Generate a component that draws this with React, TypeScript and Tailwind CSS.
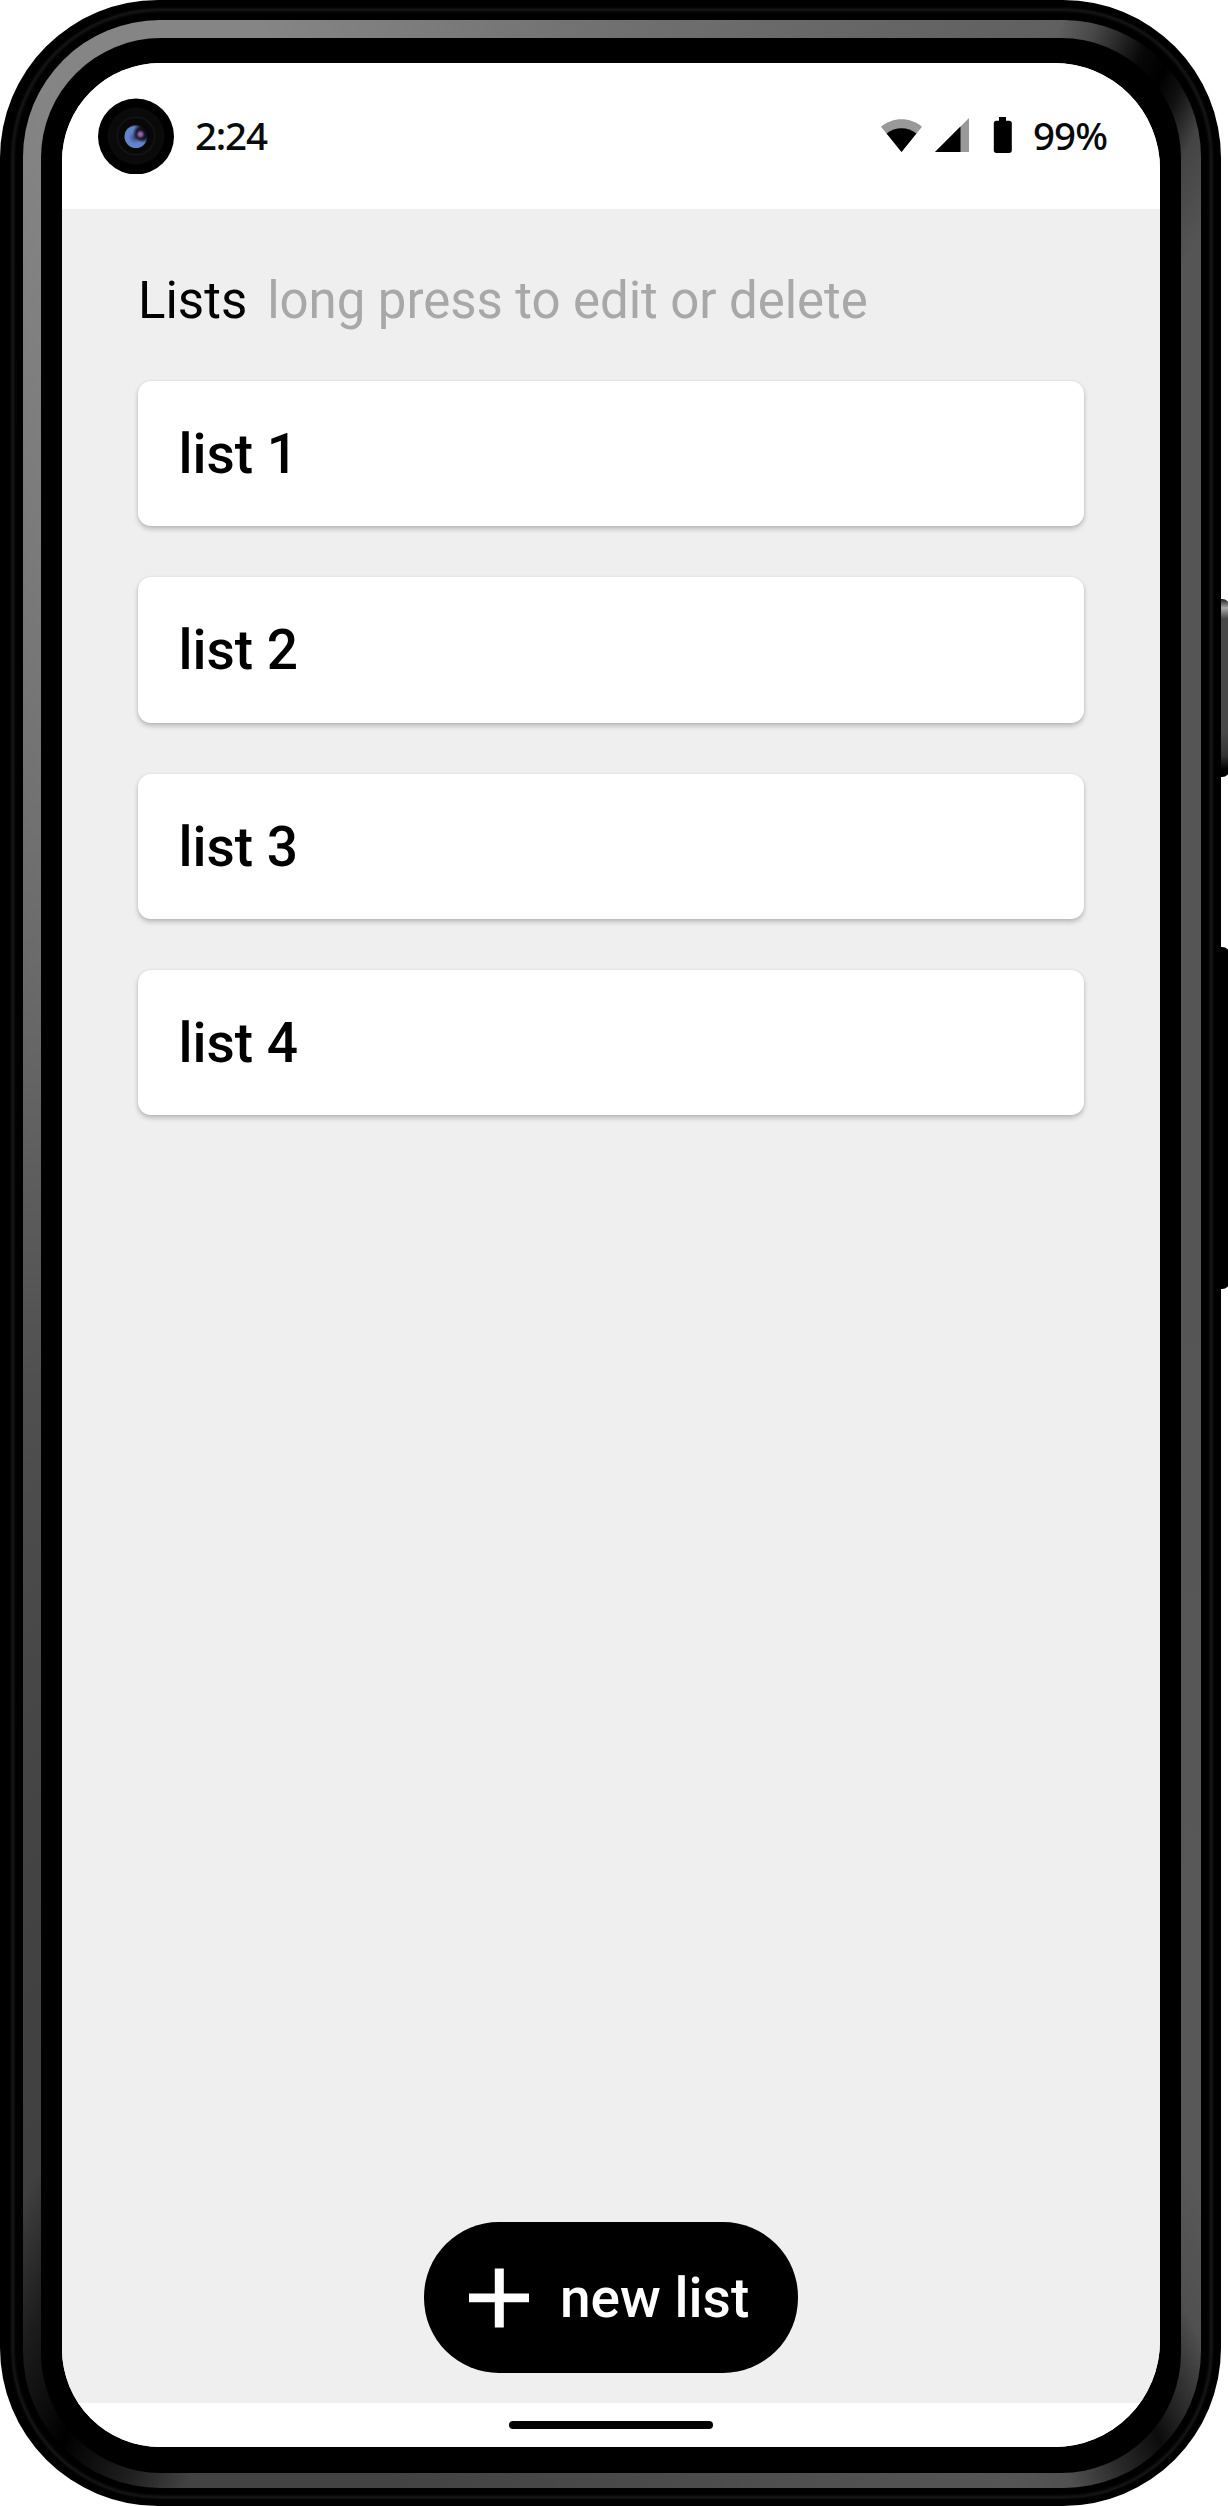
const lists = ['list 1', 'list 2', 'list 3', 'list 4'];

function StatusBar() {
  return (
    <header className="flex h-[146px] items-start bg-white pl-[36px] pt-[35px]">
      <svg width="76" height="76" viewBox="0 0 76 76" className="shrink-0">
        <defs>
          <radialGradient id="lens" cx="0.45" cy="0.55" r="0.58">
            <stop offset="0" stopColor="#3c4a74" />
            <stop offset="0.45" stopColor="#6480cc" />
            <stop offset="0.8" stopColor="#5f88cc" />
            <stop offset="1" stopColor="#5070b8" stopOpacity="0.2" />
          </radialGradient>
          <radialGradient id="shade">
            <stop offset="0" stopColor="#06060c" />
            <stop offset="0.6" stopColor="#06060c" stopOpacity="0.85" />
            <stop offset="1" stopColor="#06060c" stopOpacity="0" />
          </radialGradient>
          <radialGradient id="glare">
            <stop offset="0" stopColor="#b474b4" />
            <stop offset="0.45" stopColor="#704a80" />
            <stop offset="1" stopColor="#0a0a12" stopOpacity="0" />
          </radialGradient>
        </defs>
        <circle cx="38" cy="38.5" r="38" fill="#000" />
        <circle cx="38" cy="38" r="28.5" fill="#0a0a0a" />
        <circle cx="38" cy="38" r="18.7" fill="#080808" stroke="#181818" strokeWidth="1.2" />
        <circle cx="38" cy="38.5" r="11.5" fill="url(#lens)" />
        <circle cx="44.5" cy="35" r="10" fill="url(#shade)" />
        <circle cx="42.4" cy="36.3" r="5.5" fill="url(#glare)" />
      </svg>
      <span className="ml-[21px] mt-[15px] w-[80px] whitespace-nowrap text-[38.5px] font-[550] leading-[44px] tracking-[-1.2px] text-[#060d0a]" style={{ fontFamily: '"Noto Sans", sans-serif' }}>
        2:24
      </span>
      <div className="ml-[606px] mt-[20px] flex items-start">
        <svg width="42" height="34" viewBox="0 0 42 34">
          <path d="M0 8.8C11.5-1.3 29.5-1.3 41 8.8L20.5 34Z" fill="#999" />
          <path d="M5.6 15.6C14.5 8.3 26.5 8.3 35.4 15.6L20.5 34Z" fill="#000" />
        </svg>
        <svg width="34" height="34" viewBox="0 0 34 34" className="ml-[12px]">
          <path d="M34 0V34H0Z" fill="#999" />
          <path d="M25.5 8.5V34H0Z" fill="#000" />
        </svg>
        <svg width="19" height="36" viewBox="0 0 19 36" className="-mt-px ml-[24px]">
          <path d="M6 0H13V3.7H16Q18.8 3.7 18.8 6.2V33.3Q18.8 36 16 36H3.5Q.8 36 .8 33.3V6.2Q.8 3.7 3.5 3.7H6Z" fill="#000" />
        </svg>
      </div>
      <span className="ml-[21px] mt-[15px] whitespace-nowrap text-[38.5px] font-[550] leading-[44px] tracking-[-0.9px] text-[#060a0a]" style={{ fontFamily: '"Noto Sans", sans-serif' }}>
        99%
      </span>
    </header>
  );
}

function ListCard({ title }: { title: string }) {
  return (
    <li className="flex h-[145.3px] items-center rounded-[13px] bg-white pl-[40.5px] pt-[2px] text-[55px] font-medium leading-none text-black shadow-[0_3px_5px_rgba(0,0,0,0.22),0_0_3px_rgba(0,0,0,0.07)]">
      {title}
    </li>
  );
}

function NewListButton() {
  return (
    <button className="flex h-[151px] w-[374px] items-center rounded-[75px] bg-black pl-[45px] text-[55px] font-medium leading-none text-white">
      <svg width="60" height="60" viewBox="0 0 60 60">
        <path d="M25.8 0.4h9v25h25.2v8.8h-25.2v25.2h-9v-25.2h-25.8v-8.8h25.8z" fill="currentColor" />
      </svg>
      <span className="ml-[31px] whitespace-nowrap pt-px">new list</span>
    </button>
  );
}

export default function App() {
  return (
    <div className="relative h-[2506px] w-[1228px] overflow-hidden bg-white" style={{ fontFamily: 'Roboto, sans-serif' }}>
      <div className="absolute left-[1206px] top-[599px] h-[178px] w-[24px] rounded-[8px] bg-[linear-gradient(180deg,#222_0%,#aaa_5%,#888_7%,#484848_11%,#484848_75%,#333_88%,#000_96%)]" />
      <div className="absolute left-[1206px] top-[947px] h-[342px] w-[24px] rounded-[8px] bg-black" />
      <div className="relative h-[2506px] w-[1221px] rounded-[158px] bg-black pb-[9px] pl-[13px] pr-[10px] pt-[10px]">
        <div className="h-full w-full rounded-[147px] bg-black pb-[9px] pl-[10px] pr-[10px] pt-[10px] shadow-[0_0_3px_1px_#242424,inset_0_0_3px_1px_#1c1c1c]">
          <div className="h-full w-full rounded-[137px] bg-[conic-gradient(from_0deg_at_50%_50%,#707070_0deg,#666_11.5deg,#606060_20deg,#484848_21.5deg,#080808_23.8deg,#000_25deg,#111_26deg,#444_27.5deg,#555_30deg,#555_90deg,#585858_148deg,#505050_151.5deg,#282828_153.8deg,#0c0c0c_155.2deg,#282828_157.2deg,#505050_159.5deg,#555_162deg,#434343_190deg,#434343_199deg,#202020_201.5deg,#000_204.8deg,#101010_206.7deg,#1c1c1c_208.3deg,#2d2d2d_210deg,#404040_212deg,#424242_220deg,#505050_258deg,#666_290deg,#787878_318deg,#828282_331deg,#858585_335deg,#858585_344deg,#707070_360deg)] pb-[15px] pl-[18px] pr-[20px] pt-[18px]">
            <div className="h-full w-full rounded-[120px] bg-black pb-[26px] pl-[21px] pr-[21px] pt-[25px]">
              <div className="flex h-full flex-col overflow-hidden rounded-l-[98px] rounded-r-[106px] bg-white">
                <StatusBar />
                <main className="flex flex-1 flex-col items-center bg-[#efefef] px-[76px] pb-[30px] pt-[62px]">
                  <h1 className="flex w-full items-baseline text-[51px] font-normal leading-[60px]">
                    <span className="whitespace-nowrap text-black">Lists</span>
                    <span className="ml-[20px] whitespace-nowrap tracking-[-0.06px] text-[#a8a8a8]">long press to edit or delete</span>
                  </h1>
                  <ul className="mt-[50px] flex w-full flex-col gap-[51px]">
                    {lists.map((title) => (
                      <ListCard key={title} title={title} />
                    ))}
                  </ul>
                  <div className="flex-1" />
                  <NewListButton />
                </main>
                <footer className="flex h-[44px] justify-center bg-white pt-[18px]">
                  <div className="h-[8px] w-[204px] rounded-full bg-black" />
                </footer>
              </div>
            </div>
          </div>
        </div>
      </div>
    </div>
  );
}
